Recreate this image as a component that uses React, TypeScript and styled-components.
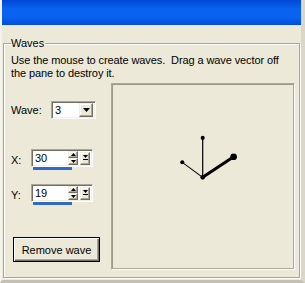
import React from 'react';
import styled, {createGlobalStyle} from 'styled-components';

const GlobalStyle = createGlobalStyle`
  html, body {
    margin: 0;
    padding: 0;
    background: #ECE9D8;
  }
  body {
    font-family: "Liberation Sans", Arial, sans-serif;
    font-size: 11px;
    color: #000;
  }
`

const Window = styled.div`
  width: 305px;
  height: 283px;
  box-sizing: border-box;
  display: flex;
  flex-direction: column;
  background: #ECE9D8;
  border-left: 2px solid #F4F3EC;
  border-right: 4px solid #DAD7C6;
  border-bottom: 3px solid #C4C1B0;
  overflow: hidden;
`

const TitleBar = styled.div`
  height: 25px;
  flex: none;
  background: linear-gradient(#0048D6, #0A62F0 35%, #0A62F0 70%, #004CDA);
`

const Body = styled.div`
  flex: 1;
  padding: 12px 1px 2px 1px;
  display: flex;
`

const GroupBox = styled.fieldset`
  flex: 1;
  margin: 0;
  padding: 4px 3px 0 7px;
  border: 1px solid #A7A59A;
  box-shadow: inset 1px 1px 0 #fff, 1px 1px 0 #fff;
  min-width: 0;
`

const Legend = styled.legend`
  padding: 0 1px 0 0;
  margin-left: 0;
  line-height: 13px;
`

const Description = styled.p`
  margin: 0;
  line-height: 13px;
  white-space: nowrap;
  letter-spacing: -0.1px;
`

const Content = styled.div`
  display: flex;
  margin-top: 3px;
`

const Controls = styled.div`
  width: 100px;
  display: flex;
  flex-direction: column;
`

const Row = styled.div<{$top: number}>`
  display: flex;
  align-items: center;
  margin-top: ${p => p.$top}px;
`

const Label = styled.span<{$w: number}>`
  width: ${p => p.$w}px;
  flex: none;
`

const Sunken = styled.div<{$w: number}>`
  box-sizing: border-box;
  width: ${p => p.$w}px;
  height: 18px;
  display: flex;
  align-items: center;
  background: #fff;
  border: 1px solid;
  border-color: #ACA899 #fff #fff #ACA899;
  box-shadow: inset 1px 1px 0 #716F64, inset -1px -1px 0 #F1EFE2;
  padding: 2px 2px 2px 3px;
`

const Value = styled.span`
  flex: 1;
`

const RaisedButton = styled.div<{$w: number; $h: number}>`
  box-sizing: border-box;
  width: ${p => p.$w}px;
  height: ${p => p.$h}px;
  background: #ECE9D8;
  border: 1px solid;
  border-color: #F1EFE2 #716F64 #716F64 #F1EFE2;
  box-shadow: inset -1px -1px 0 #ACA899, inset 1px 1px 0 #fff;
  display: flex;
  align-items: center;
  justify-content: center;
  flex: none;
`

const SpinStack = styled.div`
  display: flex;
  flex-direction: column;
  margin-right: 2px;
`

const SpinGroup = styled.div`
  display: flex;
  flex-direction: column;
`

const Track = styled.div`
  height: 3px;
  width: 39px;
  margin-left: 2px;
  background: #316AC5;
`

const PushButton = styled.button`
  box-sizing: border-box;
  margin: 0 0 0 2px;
  width: 87px;
  height: 25px;
  font-family: "Liberation Sans", Arial, sans-serif;
  font-size: 11px;
  color: #000;
  background: #ECE9D8;
  border: 1px solid #000;
  box-shadow: inset 1px 1px 0 #fff, inset -1px -1px 0 #716F64, inset -2px -2px 0 #ACA899;
  padding: 0;
`

const Pane = styled.div`
  box-sizing: border-box;
  width: 184px;
  height: 187px;
  border: 1px solid;
  border-color: #ACA899 #fff #fff #ACA899;
  box-shadow: inset 1px 1px 0 #9D9A8A, inset -1px -1px 0 #ACA899;
  display: flex;
`

const Canvas = styled.svg`
  flex: 1;
  display: block;
`

const DownArrow = () => (
  <svg width="7" height="4" viewBox="0 0 7 4"><path d="M0 0h7L3.5 4z" fill="#000"/></svg>
)

const SmallUp = () => (
  <svg width="5" height="3" viewBox="0 0 5 3"><path d="M2.5 0L5 3H0z" fill="#000"/></svg>
)

const SmallDown = () => (
  <svg width="5" height="3" viewBox="0 0 5 3"><path d="M0 0h5L2.5 3z" fill="#000"/></svg>
)

const DropLine = () => (
  <svg width="5" height="6" viewBox="0 0 5 6"><path d="M0 0h5L2.5 3z" fill="#000"/><rect x="0" y="4" width="5" height="1" fill="#000"/></svg>
)

const Spin = ({value}: {value: string}) => (
  <SpinGroup>
    <Sunken $w={62}>
      <Value>{value}</Value>
      <SpinStack>
        <RaisedButton $w={10} $h={7}><SmallUp/></RaisedButton>
        <RaisedButton $w={10} $h={7}><SmallDown/></RaisedButton>
      </SpinStack>
      <RaisedButton $w={10} $h={13}><DropLine/></RaisedButton>
    </Sunken>
    <Track/>
  </SpinGroup>
)

export default function App() {
  return (
    <>
      <GlobalStyle/>
      <Window>
        <TitleBar/>
        <Body>
          <GroupBox>
            <Legend>Waves</Legend>
            <Description>
              Use the mouse to create waves.&nbsp; Drag a wave vector off<br/>
              the pane to destroy it.
            </Description>
            <Content>
              <Controls>
                <Row $top={18}>
                  <Label $w={40}>Wave:</Label>
                  <Sunken $w={45}>
                    <Value>3</Value>
                    <RaisedButton $w={14} $h={14}><DownArrow/></RaisedButton>
                  </Sunken>
                </Row>
                <Row $top={30}>
                  <Label $w={20}>X:</Label>
                  <Spin value="30"/>
                </Row>
                <Row $top={14}>
                  <Label $w={20}>Y:</Label>
                  <Spin value="19"/>
                </Row>
                <Row $top={32}>
                  <PushButton>Remove wave</PushButton>
                </Row>
              </Controls>
              <Pane>
                <Canvas viewBox="0 0 180 183">
                  <line x1="89.7" y1="92.3" x2="89.7" y2="53.3" stroke="#000" strokeWidth="1.2"/>
                  <line x1="89.7" y1="92.3" x2="69.5" y2="77.5" stroke="#000" strokeWidth="1"/>
                  <line x1="89.7" y1="92.3" x2="120.3" y2="72" stroke="#000" strokeWidth="3"/>
                  <circle cx="89.7" cy="92.3" r="2.3" fill="#000"/>
                  <circle cx="89.7" cy="53.3" r="2" fill="#000"/>
                  <circle cx="69.5" cy="77.5" r="2" fill="#000"/>
                  <circle cx="120.3" cy="72" r="3.3" fill="#000"/>
                </Canvas>
              </Pane>
            </Content>
          </GroupBox>
        </Body>
      </Window>
    </>
  );
}
